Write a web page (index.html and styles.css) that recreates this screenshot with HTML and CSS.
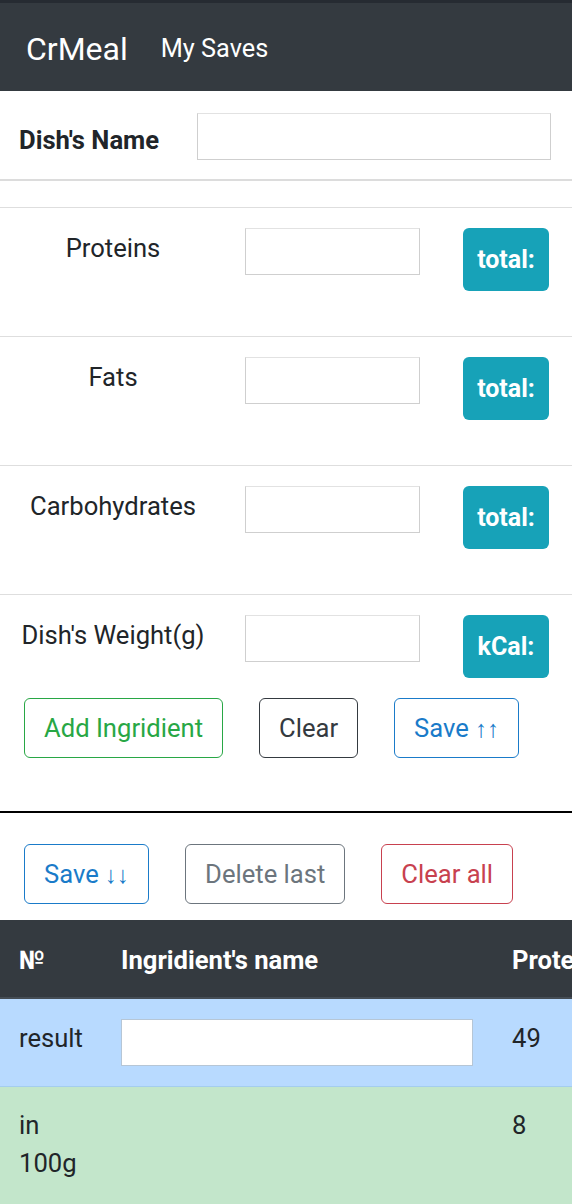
FILE: index.html
```html
<!DOCTYPE html>
<html lang="en">
<head>
<meta charset="utf-8">
<title>CrMeal</title>
<link rel="stylesheet" href="styles.css">
</head>
<body>
<nav class="navbar">
  <span class="brand">CrMeal</span>
  <span class="nav-link">My Saves</span>
</nav>

<section class="dish-name">
  <label class="dish-label">Dish's Name</label>
  <input class="field field-name" type="text">
</section>
<div class="spacer"></div>

<section class="macros">
  <div class="macro-row">
    <div class="macro-label">Proteins</div>
    <div class="macro-input"><input class="field field-macro" type="text"></div>
    <div class="macro-total"><span class="badge">total:</span></div>
  </div>
  <div class="macro-row">
    <div class="macro-label">Fats</div>
    <div class="macro-input"><input class="field field-macro" type="text"></div>
    <div class="macro-total"><span class="badge">total:</span></div>
  </div>
  <div class="macro-row">
    <div class="macro-label">Carbohydrates</div>
    <div class="macro-input"><input class="field field-macro" type="text"></div>
    <div class="macro-total"><span class="badge">total:</span></div>
  </div>
  <div class="macro-row last">
    <div class="macro-label">Dish's Weight(g)</div>
    <div class="macro-input"><input class="field field-macro" type="text"></div>
    <div class="macro-total"><span class="badge">kCal:</span></div>
  </div>
  <div class="btn-row top-actions">
    <button class="btn btn-green">Add Ingridient</button>
    <button class="btn btn-dark">Clear</button>
    <button class="btn btn-blue">Save <span class="arrows">↑↑</span></button>
  </div>
</section>

<div class="divider"></div>

<div class="btn-row bottom-actions">
  <button class="btn btn-blue">Save <span class="arrows">↓↓</span></button>
  <button class="btn btn-gray">Delete last</button>
  <button class="btn btn-red">Clear all</button>
</div>

<div class="table-wrap">
  <table class="table">
    <thead>
      <tr>
        <th class="c-no">№</th>
        <th class="c-name">Ingridient's name</th>
        <th class="c-num">Proteins</th>
        <th class="c-num">Fats</th>
        <th class="c-num">Carbohydrates</th>
        <th class="c-num">Weight</th>
        <th class="c-num">kCal</th>
      </tr>
    </thead>
    <tbody>
      <tr class="row-result">
        <td>result</td>
        <td><input class="field field-table" type="text"></td>
        <td>49</td>
        <td>12</td>
        <td>30</td>
        <td>600</td>
        <td>424</td>
      </tr>
      <tr class="row-100">
        <td>in 100g</td>
        <td></td>
        <td>8</td>
        <td>2</td>
        <td>5</td>
        <td>100</td>
        <td>71</td>
      </tr>
    </tbody>
  </table>
</div>
</body>
</html>
```

FILE: styles.css
```css
html, body {
  margin: 0;
  padding: 0;
}
body {
  width: 572px;
  overflow: hidden;
  font-family: Roboto, "Liberation Sans", Arial, sans-serif;
  font-size: 25.6px;
  line-height: 38px;
  color: #212529;
  background: #fff;
}

.navbar {
  box-sizing: border-box;
  height: 91px;
  border-top: 3px solid #262b32;
  background: #343a40;
  display: flex;
  align-items: center;
  padding-left: 26px;
  padding-top: 3px;
}
.brand {
  color: #fff;
  font-size: 32px;
  line-height: 48px;
  margin-right: 25px;
}
.nav-link {
  color: #fff;
  padding: 0 8px;
  font-size: 25.3px;
}

.dish-name {
  box-sizing: border-box;
  height: 90px;
  display: flex;
  align-items: center;
  padding: 3px 0 0 19px;
  border-bottom: 2px solid #dcdcdc;
}
.dish-label {
  width: 178px;
  font-weight: 700;
  flex: none;
  padding-top: 6px;
}
.field {
  box-sizing: border-box;
  height: 47px;
  border: 1px solid #cfcfcf;
  border-top-color: #e2e2e2;
  border-radius: 0;
  background: #fff;
  padding: 0 8px;
  font: inherit;
  margin: 0;
}
.field-name {
  width: 354px;
}
.spacer {
  height: 26px;
}

.macro-row {
  box-sizing: border-box;
  height: 129px;
  border-top: 1px solid #dedede;
  padding-top: 20px;
  display: grid;
  grid-template-columns: 226px 218px 1fr;
  align-items: start;
}
.macro-row.last {
  height: auto;
}
.macro-label {
  text-align: center;
  padding-top: 1px;
}
.macro-input {
  padding-left: 19px;
}
.field-macro {
  width: 175px;
}
.macro-total {
  padding-left: 19px;
}
.badge {
  display: flex;
  align-items: center;
  justify-content: center;
  width: 86px;
  height: 63px;
  border-radius: 6px;
  background: #17a2b8;
  color: #fff;
  font-weight: 700;
  font-size: 25px;
}

.btn-row {
  display: flex;
  gap: 36px;
  padding-left: 24px;
}
.top-actions {
  padding-top: 20px;
  padding-bottom: 53px;
}
.bottom-actions {
  padding-top: 31px;
  padding-bottom: 16px;
}
.btn {
  box-sizing: border-box;
  height: 60px;
  padding: 0 19px;
  border: 1px solid;
  border-radius: 6px;
  background: #fff;
  font-family: inherit;
  font-size: 25.6px;
  line-height: 38px;
  cursor: pointer;
}
.arrows {
  font-family: "Liberation Sans", sans-serif;
  font-size: 24px;
}
.btn-green { color: #28a745; border-color: #28a745; }
.btn-dark { color: #343a40; border-color: #343a40; }
.btn-blue { color: #1a7bc9; border-color: #1a7bc9; }
.btn-gray { color: #6c757d; border-color: #6c757d; }
.btn-red { color: #c8414f; border-color: #c8414f; }

.divider {
  height: 2px;
  background: #000;
}

.table-wrap {
  width: 572px;
  overflow: hidden;
}
.table {
  border-collapse: collapse;
  table-layout: fixed;
  width: 1293px;
}
.table th, .table td {
  text-align: left;
  vertical-align: top;
  padding: 19px;
}
.c-no { width: 64px; }
.c-name { width: 353px; }
.c-num { width: 122px; }
.table th {
  background: #343a40;
  color: #fff;
  font-weight: 700;
  border-top: 1px solid #343a40;
  border-bottom: 2px solid #454d55;
  padding-top: 20px;
  padding-bottom: 18px;
}
.row-result td {
  background: #b8daff;
  border-top: 0;
  padding-top: 20px;
  padding-bottom: 20px;
}
.row-100 td {
  background: #c3e6cb;
  border-top: 1px solid #a4cdee;
  height: 98px;
}
.field-table {
  width: 352px;
  border-color: #b6c6d6;
  vertical-align: top;
}
```
